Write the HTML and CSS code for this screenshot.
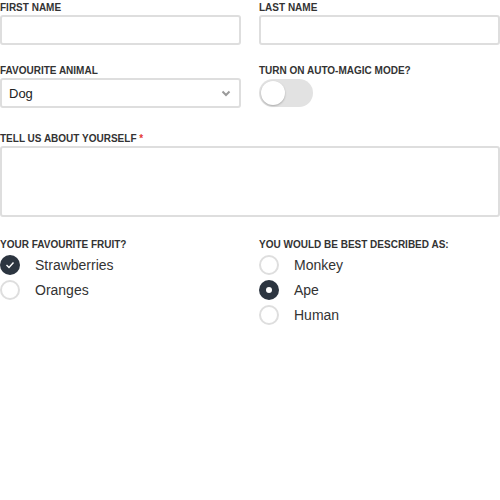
FILE: index.html
```html
<!doctype html>
<html lang="en">
<head>
    <meta charset="UTF-8">
    <title>Form</title>
    <link rel="stylesheet" href="styles.css">
</head>
<body>
    <form class="form">
        <div class="form__row">
            <div class="field">
                <label class="field__label">First name</label>
                <input type="text" class="field__input">
            </div>
            <div class="field">
                <label class="field__label">Last name</label>
                <input type="text" class="field__input">
            </div>
        </div>

        <div class="form__row form__row--spaced">
            <div class="field">
                <label class="field__label">Favourite animal</label>
                <div class="select">
                    <span>Dog</span>
                    <svg class="select__arrow" width="10" height="7" viewBox="0 0 10 7">
                        <path d="M1.5 1.5 L5 5 L8.5 1.5" fill="none" stroke="#9a9a9a" stroke-width="2"/>
                    </svg>
                </div>
            </div>
            <div class="field">
                <label class="field__label">Turn on auto-magic mode?</label>
                <div class="toggle"><span class="toggle__knob"></span></div>
            </div>
        </div>

        <div class="field field--wide">
            <label class="field__label">Tell us about yourself <span class="required">*</span></label>
            <div class="field__textarea"></div>
        </div>

        <div class="form__row">
            <div class="field">
                <label class="field__label">Your favourite fruit?</label>
                <div class="option">
                    <span class="option__box option__box--checked">
                        <svg width="10" height="8" viewBox="0 0 10 8">
                            <path d="M1.5 4 L4 6.5 L8.5 1.5" fill="none" stroke="#fff" stroke-width="1.4"/>
                        </svg>
                    </span>
                    Strawberries
                </div>
                <div class="option">
                    <span class="option__box"></span>
                    Oranges
                </div>
            </div>
            <div class="field">
                <label class="field__label">You would be best described as:</label>
                <div class="option">
                    <span class="option__box"></span>
                    Monkey
                </div>
                <div class="option">
                    <span class="option__box option__box--radio"><span class="option__dot"></span></span>
                    Ape
                </div>
                <div class="option">
                    <span class="option__box"></span>
                    Human
                </div>
            </div>
        </div>
    </form>
</body>
</html>
```

FILE: styles.css
```css
body {
    margin: 0;
    font-family: "Liberation Sans", Arial, sans-serif;
    color: #333;
    background: #fff;
}

.form {
    display: flex;
    flex-direction: column;
    width: 500px;
}

.form__row {
    display: grid;
    grid-template-columns: 241px 241px;
    column-gap: 18px;
    margin-bottom: 18px;
}

.form__row--spaced {
    margin-bottom: 23px;
}

.field {
    display: flex;
    flex-direction: column;
    align-items: flex-start;
}

.field--wide {
    margin-bottom: 20px;
}

.field__label {
    font-size: 10px;
    font-weight: bold;
    text-transform: uppercase;
    line-height: 15px;
    color: #333;
}

.required {
    color: #e53935;
}

.field__input {
    box-sizing: border-box;
    width: 100%;
    height: 30px;
    margin: 0;
    border: 2px solid #dedede;
    border-radius: 3px;
    background: #fff;
}

.select {
    box-sizing: border-box;
    width: 100%;
    height: 30px;
    display: flex;
    align-items: center;
    justify-content: space-between;
    padding: 0 8px 0 7px;
    border: 2px solid #dedede;
    border-radius: 3px;
    font-size: 13px;
    color: #222;
}

.toggle {
    width: 54px;
    height: 28px;
    margin-top: 1px;
    border-radius: 14px;
    background: #e2e2e2;
    display: flex;
    align-items: center;
    padding: 0 2px;
    box-sizing: border-box;
}

.toggle__knob {
    width: 24px;
    height: 24px;
    border-radius: 50%;
    background: #fff;
    box-shadow: 0 1px 2px rgba(0, 0, 0, 0.25);
}

.field__textarea {
    box-sizing: border-box;
    width: 100%;
    height: 71px;
    border: 2px solid #dedede;
    border-radius: 3px;
}

.option {
    display: flex;
    align-items: center;
    gap: 15px;
    height: 25px;
    font-size: 14px;
    color: #333;
}

.option__box {
    box-sizing: border-box;
    width: 20px;
    height: 20px;
    border-radius: 50%;
    border: 2px solid #dedede;
    display: flex;
    align-items: center;
    justify-content: center;
}

.option__box--checked,
.option__box--radio {
    border: none;
    background: #2c3540;
}

.option__dot {
    width: 6px;
    height: 6px;
    border-radius: 50%;
    background: #fff;
}
```
